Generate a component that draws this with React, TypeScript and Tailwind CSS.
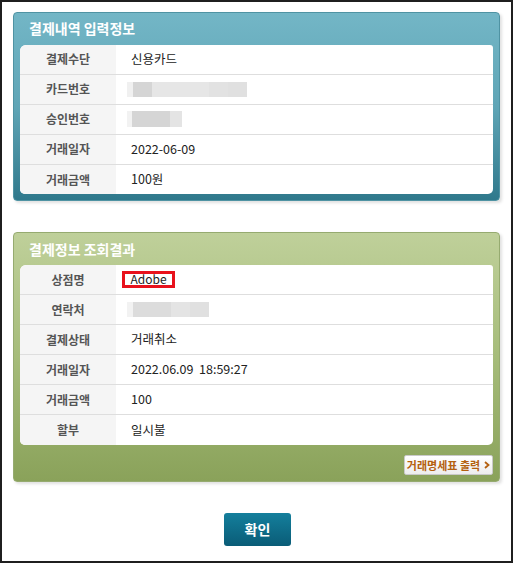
import React from "react";

const font = { fontFamily: '"Noto Sans CJK KR", "Noto Sans", sans-serif' };

type Row = { label: string; value: React.ReactNode };

function Blur({ segs }: { segs: [number, string][] }) {
  return (
    <div className="flex h-[15px]">
      {segs.map(([w, c], i) => (
        <div key={i} className="h-full" style={{ width: w, background: c }} />
      ))}
    </div>
  );
}

function Card({ rows }: { rows: Row[] }) {
  return (
    <div className="bg-white rounded-tl-[6px] rounded-tr-[3px] rounded-b-[5px] overflow-hidden">
      {rows.map((r, i) => (
        <div
          key={i}
          className={
            "flex h-[30px] " + (i < rows.length - 1 ? "border-b border-[#dedede]" : "")
          }
        >
          <div className="w-[96px] bg-[#f5f5f5] flex items-center justify-center text-[12px] font-bold text-[#555]">
            {r.label}
          </div>
          <div className="flex-1 flex items-center pl-[11px] text-[12.5px] text-[#222]">
            {r.value}
          </div>
        </div>
      ))}
    </div>
  );
}

export default function App() {
  const rows1: Row[] = [
    { label: "결제수단", value: <span className="pl-[4px]">신용카드</span> },
    {
      label: "카드번호",
      value: (
        <Blur
          segs={[
            [6, "#f0f0f0"],
            [19, "#d5d5d5"],
            [57, "#e6e6e6"],
            [19, "#e2e2e2"],
            [19, "#e0e0e0"],
          ]}
        />
      ),
    },
    {
      label: "승인번호",
      value: (
        <div className="h-[16px] flex">
          <div className="w-[5px] bg-[#f2f2f2]" />
          <div className="w-[38px] bg-[#d5d5d5]" />
          <div className="w-[12px] bg-[#e4e4e4]" />
        </div>
      ),
    },
    { label: "거래일자", value: <span className="pl-[4px]">2022-06-09</span> },
    { label: "거래금액", value: <span className="pl-[4px]">100원</span> },
  ];
  const rows2: Row[] = [
    {
      label: "상점명",
      value: (
        <div className="-ml-[5px] w-[53px] h-[17px] border-[3px] border-[#e8121c] flex items-center justify-center">
          <span className="leading-none text-[12px] -mt-[1px]">Adobe</span>
        </div>
      ),
    },
    {
      label: "연락처",
      value: (
        <Blur
          segs={[
            [6, "#f2f2f2"],
            [38, "#dcdcdc"],
            [19, "#e4e4e4"],
            [19, "#e0e0e0"],
          ]}
        />
      ),
    },
    { label: "결제상태", value: <span className="pl-[4px]">거래취소</span> },
    { label: "거래일자", value: <span className="pl-[4px]">2022.06.09&nbsp;&nbsp;18:59:27</span> },
    { label: "거래금액", value: <span className="pl-[4px]">100</span> },
    { label: "할부", value: <span className="pl-[4px]">일시불</span> },
  ];

  return (
    <div
      style={font}
      className="w-[513px] h-[563px] border-2 border-[#1f1f1f] bg-white pt-[10px] pl-[11px] pr-[11px] flex flex-col"
    >
      <div className="h-[189px] rounded-[4px] border border-[#4f93a3] bg-gradient-to-b from-[#73b6c6] via-[#5fa5b6] to-[#2f798c] px-[6px] pb-[6px] flex flex-col shadow-[2px_2px_3px_rgba(0,0,0,0.12)]">
        <div className="h-[32px] flex items-center pl-[9px] text-white font-bold text-[14px]">
          결제내역 입력정보
        </div>
        <Card rows={rows1} />
      </div>

      <div className="mt-[31px] h-[250px] rounded-[4px] border border-[#96ab70] bg-gradient-to-b from-[#bfd09a] via-[#a6bc7a] to-[#8aa25a] px-[6px] pb-[6px] flex flex-col shadow-[2px_2px_3px_rgba(0,0,0,0.12)]">
        <div className="h-[32px] flex items-center pl-[9px] text-white font-bold text-[14px]">
          결제정보 조회결과
        </div>
        <Card rows={rows2} />
        <div className="flex justify-end mt-[10px]">
          <div className="h-[20px] w-[89px] rounded-[2px] border border-[#c9c9c9] bg-gradient-to-b from-white to-[#ededed] flex items-center justify-center text-[11px] font-bold text-[#b4600f] gap-[4px]">
            <span>거래명세표 출력</span>
            <svg width="6" height="8" viewBox="0 0 6 8">
              <path d="M1 1 L4.5 4 L1 7" stroke="#b4600f" strokeWidth="1.8" fill="none" />
            </svg>
          </div>
        </div>
      </div>

      <div className="flex justify-center mt-[31px] pl-[2px]">
        <div className="w-[67px] h-[33px] rounded-[3px] bg-gradient-to-b from-[#147f9c] to-[#0a5c77] flex items-center justify-center text-white font-bold text-[14px]">
          확인
        </div>
      </div>
    </div>
  );
}
